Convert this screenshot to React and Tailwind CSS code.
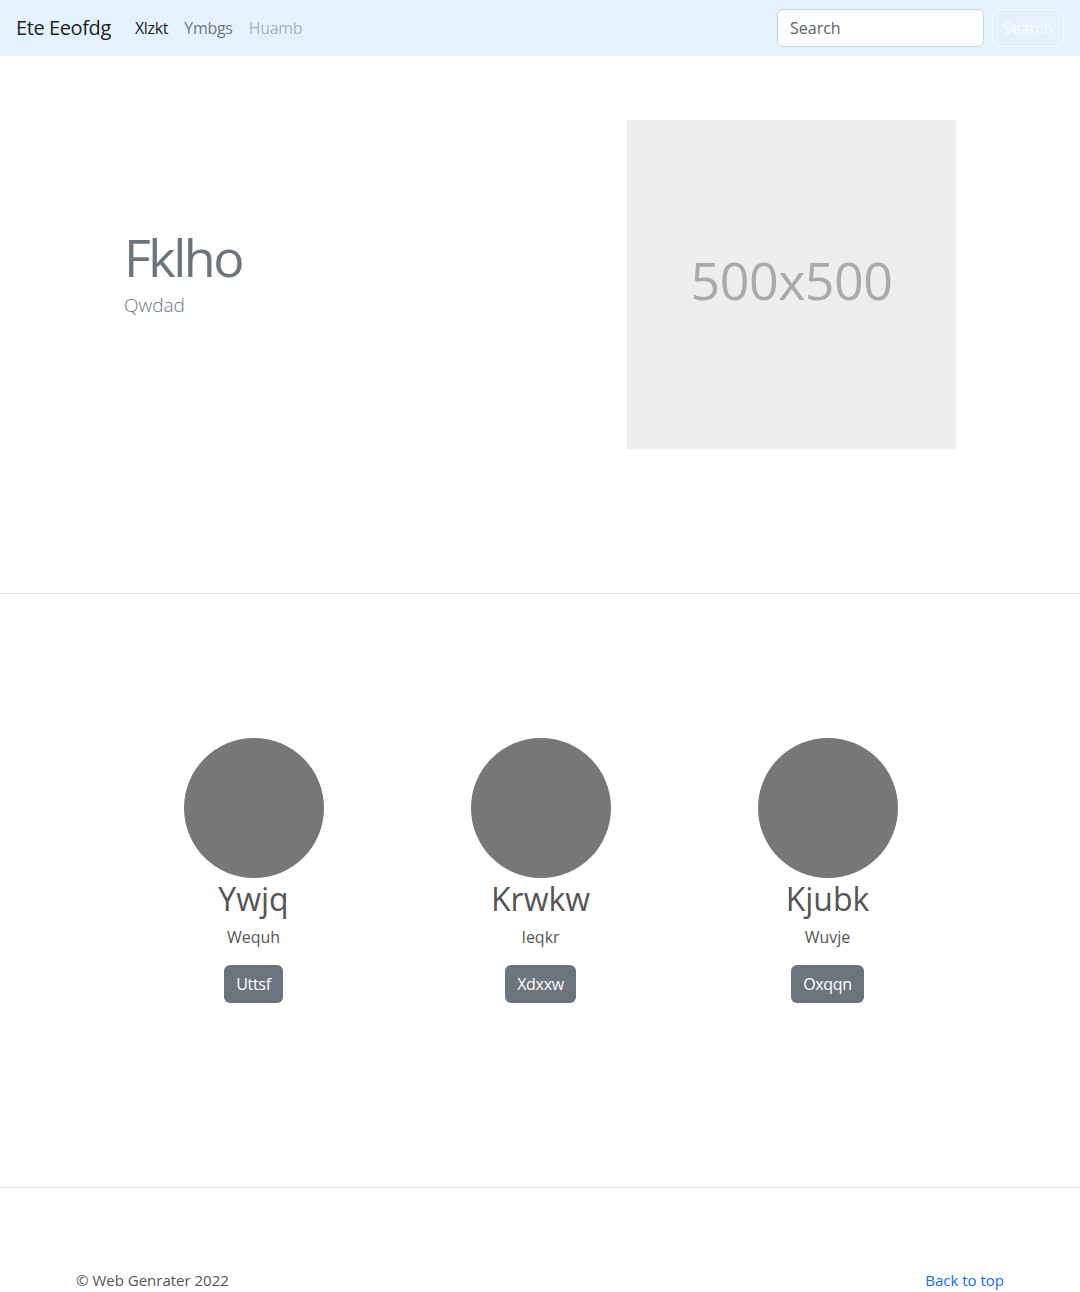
export default function App() {
  const people = [
    { name: 'Ywjq', sub: 'Wequh', btn: 'Uttsf' },
    { name: 'Krwkw', sub: 'Ieqkr', btn: 'Xdxxw' },
    { name: 'Kjubk', sub: 'Wuvje', btn: 'Oxqqn' },
  ];

  return (
    <div className="min-h-[1292px] bg-white text-[#212529] font-['Open_Sans',sans-serif]">
      {/* navbar */}
      <nav className="h-[56px] bg-[#e3f2fd] flex items-center pl-[16px] pr-[16px]">
        <span className="text-[20px] leading-[30px] tracking-[-0.4px] text-black/90 mr-[24px]">Ete Eeofdg</span>
        <div className="flex items-center gap-[16px] text-[16px] tracking-[-0.3px]">
          <span className="text-black/90">Xlzkt</span>
          <span className="text-black/55">Ymbgs</span>
          <span className="text-black/30">Huamb</span>
        </div>
        <div className="ml-auto flex items-center gap-[8px]">
          <input
            placeholder="Search"
            className="w-[207px] h-[38px] rounded-[6px] border border-[#ced4da] bg-white px-[12px] text-[16px] placeholder:text-[#5c636a] outline-none"
          />
          <button className="w-[72px] h-[38px] rounded-[6px] border border-white/70 text-white/80 text-[16px]">
            Search
          </button>
        </div>
      </nav>

      {/* hero */}
      <section className="border-b border-[#dee2e6] pt-[64px] pb-[144px]">
        <div className="flex items-center">
          <div className="w-[627px] pl-[124px] pb-[24px]">
            <h1 className="text-[52px] leading-[60px] font-normal tracking-[-2.5px] text-[#6c757d]">Fklho</h1>
            <p className="text-[19px] font-light text-[#6c757d] leading-[28px] mt-[4px]">Qwdad</p>
          </div>
          <div className="w-[329px] h-[329px] bg-[#eeeeee] flex items-center justify-center">
            <span className="text-[52px] text-[#aaaaaa] tracking-[-0.5px] mt-[-10px]">500x500</span>
          </div>
        </div>
      </section>

      {/* people */}
      <section className="border-b border-[#dee2e6] pt-[144px] pb-[184px]">
        <div className="w-[861px] ml-[110px] grid grid-cols-3">
          {people.map((p) => (
            <div key={p.name} className="flex flex-col items-center">
              <div className="w-[140px] h-[140px] rounded-full bg-[#777777]" />
              <h2 className="text-[32px] leading-[1.2] text-[#555555] mt-[2px]">{p.name}</h2>
              <p className="text-[16px] text-[#555555] mt-[7px] leading-[24px]">{p.sub}</p>
              <button className="mt-[16px] h-[38px] px-[12px] rounded-[6px] bg-[#6c757d] text-white text-[16px] tracking-[-0.3px]">
                {p.btn}
              </button>
            </div>
          ))}
        </div>
      </section>

      {/* footer */}
      <footer className="pt-[80px] px-[76px] flex justify-between text-[15px] leading-[24px]">
        <span className="text-[#555555]">© Web Genrater 2022</span>
        <a href="#" className="text-[#0d6efd] mr-[0px]">Back to top</a>
      </footer>
    </div>
  );
}
